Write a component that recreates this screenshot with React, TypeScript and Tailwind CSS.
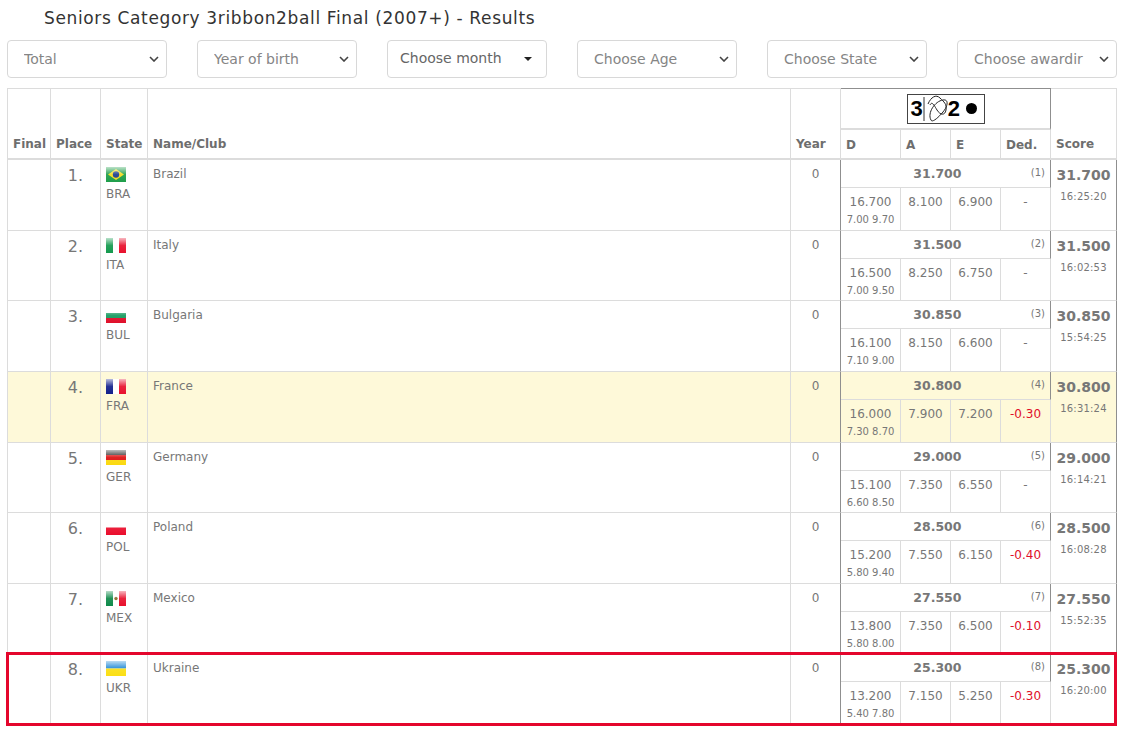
import React from "react";

const Flag = ({ code }: { code: string }) => {
  const id = "gloss" + code;
  return (
    <svg width="20" height="15" viewBox="0 0 20 15" className="block">
      <defs>
        <linearGradient id={id} x1="0" y1="0" x2="0" y2="1">
          <stop offset="0" stopColor="#fff" stopOpacity="0.7" />
          <stop offset="0.5" stopColor="#fff" stopOpacity="0.08" />
          <stop offset="1" stopColor="#fff" stopOpacity="0" />
        </linearGradient>
      </defs>
      {code === "BRA" && (
        <>
          <rect width="20" height="15" fill="#1f9e4a" />
          <path d="M10 2 L18 7.5 L10 13 L2 7.5 Z" fill="#f5dc1e" />
          <circle cx="10" cy="7.5" r="3.2" fill="#1d3f8c" />
        </>
      )}
      {code === "ITA" && (
        <>
          <rect width="7" height="15" fill="#149a4e" />
          <rect x="7" width="6" height="15" fill="#fff" />
          <rect x="13" width="7" height="15" fill="#e8112d" />
        </>
      )}
      {code === "BUL" && (
        <>
          <rect width="20" height="5" fill="#fff" />
          <rect y="5" width="20" height="5" fill="#149a5e" />
          <rect y="10" width="20" height="5" fill="#e00f2a" />
        </>
      )}
      {code === "FRA" && (
        <>
          <rect width="7" height="15" fill="#12208c" />
          <rect x="7" width="6" height="15" fill="#fff" />
          <rect x="13" width="7" height="15" fill="#e8112d" />
        </>
      )}
      {code === "GER" && (
        <>
          <rect width="20" height="5" fill="#222" />
          <rect y="5" width="20" height="5" fill="#dd1111" />
          <rect y="10" width="20" height="5" fill="#fbd90f" />
        </>
      )}
      {code === "POL" && (
        <>
          <rect width="20" height="7.5" fill="#fff" />
          <rect y="7.5" width="20" height="7.5" fill="#ea0d2c" />
        </>
      )}
      {code === "MEX" && (
        <>
          <rect width="7" height="15" fill="#0f8a4a" />
          <rect x="7" width="6" height="15" fill="#fff" />
          <rect x="13" width="7" height="15" fill="#e8112d" />
          <circle cx="10" cy="7.5" r="1.7" fill="#8a6a2a" />
        </>
      )}
      {code === "UKR" && (
        <>
          <rect width="20" height="7.5" fill="#1b87d6" />
          <rect y="7.5" width="20" height="7.5" fill="#fbdf14" />
        </>
      )}
      <rect width="20" height="15" fill={`url(#${id})`} />
    </svg>
  );
};

const Chevron = () => (
  <svg width="10" height="6" viewBox="0 0 10 6" className="shrink-0">
    <path d="M1 1 L5 5 L9 1" fill="none" stroke="#444" strokeWidth="1.6" />
  </svg>
);

const Select = ({ label }: { label: string }) => (
  <div className="w-[160px] h-[38px] bg-white border border-[#d8d8d8] rounded-[4px] flex items-center pl-[16px] pr-[7px] text-[14px] text-[#858585]">
    <span className="flex-1 overflow-hidden whitespace-nowrap pt-[1px]">{label}</span>
    <span className="ml-[10px]">
      <Chevron />
    </span>
  </div>
);

const MonthSelect = () => (
  <div className="w-[160px] h-[38px] bg-white border border-[#d8d8d8] rounded-[4px] flex items-center pl-[12px] pr-[14px] pb-[1px] text-[14px] text-[#666]">
    <span className="flex-1 whitespace-nowrap">Choose month</span>
    <svg width="8" height="4" viewBox="0 0 8 4" className="shrink-0">
      <path d="M0 0 H8 L4 4 Z" fill="#222" />
    </svg>
  </div>
);

type R = {
  p: number; c: string; n: string; total: string; d: string; sub: string;
  a: string; e: string; ded: string; time: string; top: number; bottom: number; hl?: boolean;
};

const rows: R[] = [
  { p: 1, c: "BRA", n: "Brazil", total: "31.700", d: "16.700", sub: "7.00 9.70", a: "8.100", e: "6.900", ded: "-", time: "16:25:20", top: 28, bottom: 43 },
  { p: 2, c: "ITA", n: "Italy", total: "31.500", d: "16.500", sub: "7.00 9.50", a: "8.250", e: "6.750", ded: "-", time: "16:02:53", top: 28, bottom: 42 },
  { p: 3, c: "BUL", n: "Bulgaria", total: "30.850", d: "16.100", sub: "7.10 9.00", a: "8.150", e: "6.600", ded: "-", time: "15:54:25", top: 28, bottom: 43 },
  { p: 4, c: "FRA", n: "France", total: "30.800", d: "16.000", sub: "7.30 8.70", a: "7.900", e: "7.200", ded: "-0.30", time: "16:31:24", top: 28, bottom: 43, hl: true },
  { p: 5, c: "GER", n: "Germany", total: "29.000", d: "15.100", sub: "6.60 8.50", a: "7.350", e: "6.550", ded: "-", time: "16:14:21", top: 28, bottom: 42 },
  { p: 6, c: "POL", n: "Poland", total: "28.500", d: "15.200", sub: "5.80 9.40", a: "7.550", e: "6.150", ded: "-0.40", time: "16:08:28", top: 28, bottom: 43 },
  { p: 7, c: "MEX", n: "Mexico", total: "27.550", d: "13.800", sub: "5.80 8.00", a: "7.350", e: "6.500", ded: "-0.10", time: "15:52:35", top: 28, bottom: 42 },
  { p: 8, c: "UKR", n: "Ukraine", total: "25.300", d: "13.200", sub: "5.40 7.80", a: "7.150", e: "5.250", ded: "-0.30", time: "16:20:00", top: 28, bottom: 43 },
];

const line = "border-r border-b border-[#dcdcdc]";
const th = "border-r border-b-2 border-r-[#dcdcdc] border-b-[#dcdcdc] align-bottom text-left px-[5px] pb-[5px] pt-0 text-[12px] font-bold text-[#6e6e6e] whitespace-nowrap";

const Apparatus = () => (
  <div className="mx-auto w-[78px] h-[30px] border border-[#444] bg-white flex items-center pl-[3px] text-black">
    <span className="text-[22px] leading-none font-bold" style={{ fontFamily: "'Liberation Sans', sans-serif" }}>3</span>
    <svg width="28" height="28" viewBox="0 0 28 28" className="shrink-0">
      <path d="M1 2 V26" stroke="#333" strokeWidth="1" fill="none" />
      <path d="M8 25 C4 18 12 6 20 5 C26 4 25 11 20 17 C15 23 9 28 8 25 M5 9 C8 2 13 -1 17 3 C21 7 24 9 23 15 C22 21 17 20 14 15 C11 10 9 6 7 10" stroke="#222" strokeWidth="1" fill="none" />
    </svg>
    <span className="text-[22px] leading-none font-bold -ml-[3px]" style={{ fontFamily: "'Liberation Sans', sans-serif" }}>2</span>
    <span className="ml-[6px] w-[11px] h-[11px] rounded-full bg-black" />
  </div>
);

export default function App() {
  return (
    <div className="relative w-[1124px] h-[730px] bg-white overflow-hidden" style={{ fontFamily: "'DejaVu Sans', Verdana, sans-serif" }}>
      <h1 className="pl-[44px] pt-[7px] h-[40px] text-[17px] leading-[22px] font-normal text-[#333] whitespace-nowrap tracking-[0.64px]">
        Seniors Category 3ribbon2ball Final (2007+) - Results
      </h1>
      <div className="flex justify-between pl-[7px] w-[1117px]">
        <Select label="Total" />
        <Select label="Year of birth" />
        <MonthSelect />
        <Select label="Choose Age" />
        <Select label="Choose State" />
        <Select label="Choose awardir" />
      </div>
      <table className="ml-[7px] mt-[10px] w-[1110px] table-fixed border-separate border-spacing-0 text-[12px] text-[#777]">
        <colgroup>
          <col className="w-[44px]" />
          <col className="w-[50px]" />
          <col className="w-[47px]" />
          <col className="w-[643px]" />
          <col className="w-[50px]" />
          <col className="w-[60px]" />
          <col className="w-[50px]" />
          <col className="w-[50px]" />
          <col className="w-[50px]" />
          <col className="w-[66px]" />
        </colgroup>
        <thead>
          <tr className="h-[42px]">
            <th rowSpan={2} className={`${th} border-l border-l-[#dcdcdc] border-t border-t-[#dcdcdc]`}>Final</th>
            <th rowSpan={2} className={`${th} border-t border-t-[#dcdcdc]`}>Place</th>
            <th rowSpan={2} className={`${th} border-t border-t-[#dcdcdc]`}>State</th>
            <th rowSpan={2} className={`${th} border-t border-t-[#dcdcdc]`}>Name/Club</th>
            <th rowSpan={2} className={`${th} border-t border-t-[#dcdcdc] border-r-[#8f8f8f]`}>Year</th>
            <th colSpan={4} className="border-t border-t-[#8f8f8f] border-r border-r-[#8f8f8f] border-b-2 border-b-[#dcdcdc] p-0 align-middle">
              <Apparatus />
            </th>
            <th rowSpan={2} className={`${th} border-t border-t-[#dcdcdc] border-r-[#8f8f8f]`}>Score</th>
          </tr>
          <tr className="h-[30px]">
            <th className={`${th} !pb-[4px]`}>D</th>
            <th className={`${th} !pb-[4px]`}>A</th>
            <th className={`${th} !pb-[4px]`}>E</th>
            <th className={`${th} !pb-[4px] border-r-[#8f8f8f]`}>Ded.</th>
          </tr>
        </thead>
        <tbody>
          {rows.map((r) => {
            const bg = r.hl ? "bg-[#fef9d9]" : "";
            return (
              <React.Fragment key={r.p}>
                <tr className={bg} style={{ height: r.top }}>
                  <td rowSpan={2} className={`${line} border-l border-l-[#dcdcdc]`} />
                  <td rowSpan={2} className={`${line} align-top text-center pt-[5px] text-[16px] leading-[22px]`}>{r.p}.</td>
                  <td rowSpan={2} className={`${line} align-top pl-[5px] pt-[7px]`}>
                    <Flag code={r.c} />
                    <div className="leading-[14px] pt-[5px]">{r.c}</div>
                  </td>
                  <td rowSpan={2} className={`${line} align-top pl-[5px] pt-[6px] leading-[16px]`}>{r.n}</td>
                  <td rowSpan={2} className={`${line} border-r-[#8f8f8f] align-top text-center pt-[6px] leading-[16px]`}>0</td>
                  <td colSpan={4} className="border-r border-r-[#8f8f8f] border-b border-b-[#dcdcdc] p-0">
                    <div className="flex items-center pr-[5px]">
                      <span className="flex-1 text-center font-bold text-[12.5px] pl-[3px] pt-[1px]">{r.total}</span>
                      <span className="text-[10px] pb-[2px]">({r.p})</span>
                    </div>
                  </td>
                  <td rowSpan={2} className="border-r border-r-[#8f8f8f] border-b border-b-[#dcdcdc] align-top text-center pt-[6px]">
                    <div className="font-bold text-[14px] leading-[18px]">{r.total}</div>
                    <div className="text-[10px] leading-[12px] pt-[7px] tracking-[0.2px]">{r.time}</div>
                  </td>
                </tr>
                <tr className={bg} style={{ height: r.bottom }}>
                  <td className={`${line} align-top text-center pt-[6px]`}>
                    <div className="leading-[16px]">{r.d}</div>
                    <div className="text-[10px] leading-[12px] pt-[4px]">{r.sub}</div>
                  </td>
                  <td className={`${line} align-top text-center pt-[6px] leading-[16px]`}>{r.a}</td>
                  <td className={`${line} align-top text-center pt-[6px] leading-[16px]`}>{r.e}</td>
                  <td className={`${line} align-top text-center pt-[6px] leading-[16px] ${r.ded === "-" ? "" : "text-[#e0102a]"}`}>{r.ded}</td>
                </tr>
              </React.Fragment>
            );
          })}
        </tbody>
      </table>
      <div className="absolute left-[6px] top-[652px] w-[1111px] h-[74px] border-[3px] border-[#e4062c] pointer-events-none" />
    </div>
  );
}
